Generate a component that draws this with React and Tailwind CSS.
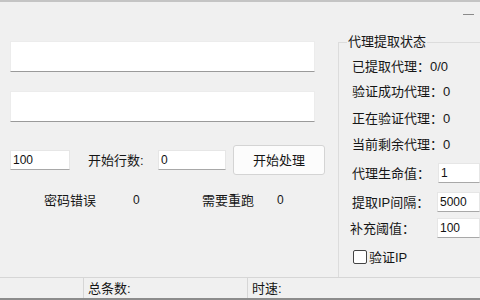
export default function App() {
  const font = { fontFamily: '"Liberation Sans", "Noto Sans CJK SC", sans-serif' };
  const input = "bg-white border border-[#e6e6e6] border-b-[#a8a8a8] h-[20px] px-[2px] flex items-center text-[12px] text-[#111]";
  return (
    <div className="w-[480px] h-[300px] bg-[#f0f0f0] flex flex-col overflow-hidden text-[13px] text-[#161616] leading-none" style={font}>
      <div className="h-[30px] shrink-0 border-t-2 border-[#c4c4c4] flex justify-end items-start">
        <div className="w-[11px] h-[1px] bg-[#8a8a8a] mt-[12px] mr-[6px]" />
      </div>
      <div className="flex flex-1 min-h-0">
        <div className="w-[338px] shrink-0 px-[10px] flex flex-col">
          <div className="mt-[11px] h-[31px] w-[305px] bg-white border border-[#ececec] border-b-[#9a9a9a]" />
          <div className="mt-[19px] h-[31px] w-[305px] bg-white border border-[#ececec] border-b-[#9a9a9a]" />
          <div className="mt-[23px] h-[30px] flex items-center">
            <div className={`${input} w-[60px]`}>100</div>
            <div className="ml-[18px] w-[62px]">开始行数:</div>
            <div className={`${input} ml-[8px] w-[68px]`}>0</div>
            <button className="ml-[7px] w-[92px] h-[30px] bg-[#fcfcfc] border border-[#d4d4d4] rounded-[3px] text-[13px] text-[#161616]">开始处理</button>
          </div>
          <div className="mt-[15px] h-[20px] flex items-center pl-[34px]">
            <span className="w-[89px]">密码错误</span>
            <span className="w-[69px] text-[12px]">0</span>
            <span className="w-[75px]">需要重跑</span>
            <span className="text-[12px]">0</span>
          </div>
        </div>
        <div className="flex-1 relative mt-[12px] border-l border-t border-[#dcdcdc] flex flex-col">
          <div className="absolute -top-[8px] left-[8px] bg-[#f0f0f0] px-[1px]">代理提取状态</div>
          <div className="mt-[13px] h-[20px] flex items-center pl-[13px]">已提取代理：0/0</div>
          <div className="mt-[5px] h-[20px] flex items-center pl-[13px]">验证成功代理：0</div>
          <div className="mt-[7px] h-[20px] flex items-center pl-[13px]">正在验证代理：0</div>
          <div className="mt-[6px] h-[20px] flex items-center pl-[13px]">当前剩余代理：0</div>
          <div className="mt-[9px] h-[20px] flex items-center pl-[13px]">
            <span className="w-[86px]">代理生命值：</span>
            <div className={`${input} flex-1`}>1</div>
          </div>
          <div className="mt-[9px] h-[20px] flex items-center pl-[13px]">
            <span className="w-[85px]">提取IP间隔：</span>
            <div className={`${input} flex-1`}>5000</div>
          </div>
          <div className="mt-[6px] h-[20px] flex items-center pl-[11px]">
            <span className="w-[87px]">补充阈值：</span>
            <div className={`${input} flex-1`}>100</div>
          </div>
          <div className="mt-[9px] h-[20px] flex items-center pl-[14px]">
            <div className="w-[14px] h-[14px] bg-white border border-[#444] rounded-[2px]" />
            <span className="ml-[2px]">验证IP</span>
          </div>
        </div>
      </div>
      <div className="h-[21px] shrink-0 border-t border-[#d6d6d6] flex items-stretch">
        <div className="w-[84px] border-r border-[#d6d6d6]" />
        <div className="w-[164px] border-r border-[#d6d6d6] pl-[4px] flex items-center">总条数:</div>
        <div className="pl-[4px] flex items-center">时速:</div>
      </div>
      <div className="h-[2px] shrink-0 bg-[#8c8c8c]" />
    </div>
  );
}
